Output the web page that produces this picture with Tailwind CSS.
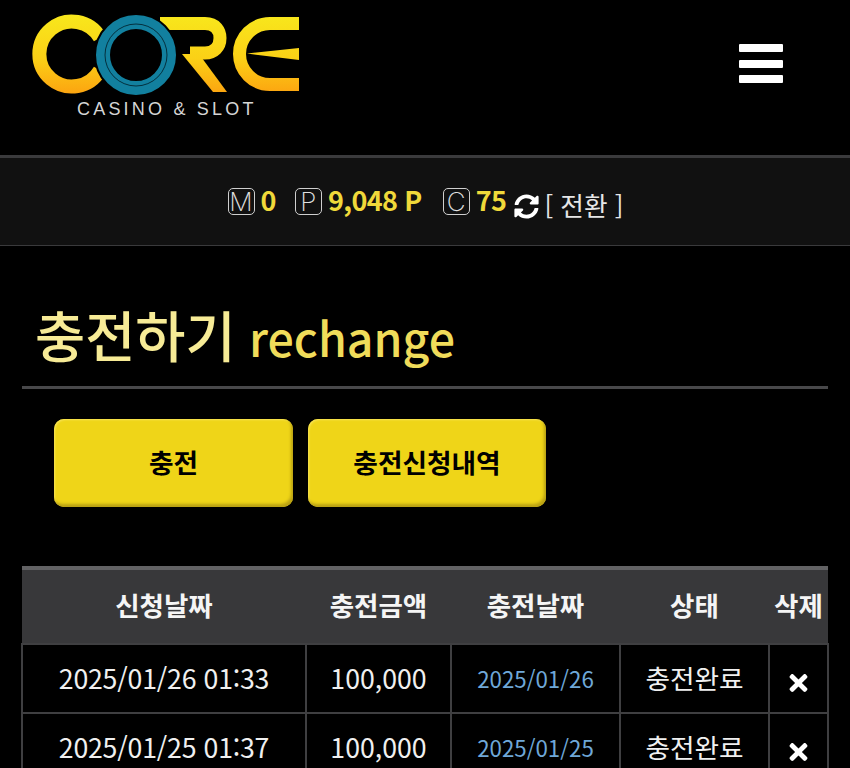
<!DOCTYPE html>
<html lang="ko">
<head>
  <meta charset="UTF-8">
  <title>충전하기 - CORE</title>
  <script src="https://cdn.jsdelivr.net/npm/@tailwindcss/browser@4"></script>
</head>
<body class="bg-black h-[768px] overflow-hidden font-['Noto_Sans_CJK_KR','Noto_Sans',sans-serif] text-[#f0f0f0]">

  <!-- Header -->
  <header class="h-[155px] flex justify-between pl-[32px] pr-[67px] pt-[14px]">
    <div class="w-[270px]">
      <svg class="block" width="270" height="82" viewBox="32 14 270 82" fill="none">
        <defs>
          <linearGradient id="gold" x1="0" y1="15" x2="0" y2="93" gradientUnits="userSpaceOnUse">
            <stop offset="0" stop-color="#f8e71c"/>
            <stop offset="0.55" stop-color="#fbd116"/>
            <stop offset="1" stop-color="#fca510"/>
          </linearGradient>
        </defs>
        <!-- C -->
        <path d="M100 37.750 A32.500 32.500 0 1 0 100 70.250" stroke="url(#gold)" stroke-width="14"/>
        <!-- R -->
        <path d="M160 23.500 H205 C216 23.500 220 31 220 38 C220 47 214 53 205 53 H190" stroke="url(#gold)" stroke-width="13"/>
        <path d="M182 54 H199 L227 92 H213 Z" fill="url(#gold)"/>
        <!-- E -->
        <path d="M299 23.500 H270 A30.500 30.500 0 0 0 270 84.500 H299" stroke="url(#gold)" stroke-width="13"/>
        <path d="M247 53.500 L299 48 V60 Z" fill="url(#gold)"/>
        <!-- ring -->
        <circle cx="136" cy="55" r="33.500" stroke="#000" stroke-width="17"/>
        <circle cx="136" cy="55" r="33" stroke="#12809f" stroke-width="14"/>
        <circle cx="136" cy="55" r="31" stroke="#04303e" stroke-width="1"/>
      </svg>
      <div class="mt-[2px] pl-[45px] text-[18px] leading-[22px] tracking-[3.2px] text-[#d5d5d5] font-['Liberation_Sans',sans-serif] whitespace-nowrap">CASINO &amp; SLOT</div>
    </div>
    <button class="w-[44px] mt-[30px] h-[39px] flex flex-col justify-between">
      <span class="block h-[8px] w-full rounded-[1px] bg-white"></span>
      <span class="block h-[8px] w-full rounded-[1px] bg-white"></span>
      <span class="block h-[8px] w-full rounded-[1px] bg-white"></span>
    </button>
  </header>

  <!-- Balance bar -->
  <section class="h-[91px] bg-[#111111] border-t-[3px] border-b border-t-[#3a3a3c] border-b-[#3a3a3c] flex items-center justify-center pl-[1px] text-[27px] tracking-[-0.6px] font-bold text-[#f0d93a]">
    <span class="w-[27px] h-[27px] border border-[#cfcfcf] rounded-[5px] flex items-center justify-center text-[26px] font-extralight tracking-normal text-[#e0e0e0] font-['Inter',sans-serif]">M</span>
    <span class="ml-[6px] mr-[19px] -mt-[3px]">0</span>
    <span class="w-[27px] h-[27px] border border-[#cfcfcf] rounded-[5px] flex items-center justify-center text-[26px] font-extralight tracking-normal text-[#e0e0e0] font-['Inter',sans-serif]">P</span>
    <span class="ml-[6px] mr-[21px] -mt-[3px]">9,048 P</span>
    <span class="w-[27px] h-[27px] border border-[#cfcfcf] rounded-[5px] flex items-center justify-center text-[26px] font-extralight tracking-normal text-[#e0e0e0] font-['Inter',sans-serif]">C</span>
    <span class="ml-[6px] mr-[8px] -mt-[3px]">75</span>
    <svg class="mt-[10px]" width="25" height="25" viewBox="0 0 512 512" fill="#ffffff"><path d="M370.72 133.28C339.458 104.008 298.888 87.962 255.848 88c-77.458.068-144.328 53.178-162.791 126.85-1.344 5.363-6.122 9.15-11.651 9.15H24.103c-7.498 0-13.194-6.807-11.807-14.176C33.933 94.924 134.813 8 256 8c66.448 0 126.791 26.136 171.315 68.685L463.03 40.97C478.149 25.851 504 36.559 504 57.941V192c0 13.255-10.745 24-24 24H345.941c-21.382 0-32.09-25.851-16.971-40.971l41.75-41.749zM32 296h134.059c21.382 0 32.09 25.851 16.971 40.971l-41.75 41.75c31.262 29.273 71.835 45.319 114.876 45.28 77.418-.07 144.315-53.144 162.787-126.849 1.344-5.363 6.122-9.15 11.651-9.15h57.304c7.498 0 13.194 6.807 11.807 14.176C478.067 417.076 377.187 504 256 504c-66.448 0-126.791-26.136-171.315-68.685L48.97 471.03C33.851 486.149 8 475.441 8 454.059V320c0-13.255 10.745-24 24-24z"/></svg>
    <span class="ml-[5px] mt-[8px] text-[25.700px] font-normal tracking-normal text-[#e6e6e6] whitespace-nowrap">[ 전환 ]</span>
  </section>

  <!-- Title -->
  <div class="mx-[22px] mt-[52px] h-[91px] border-b-[3px] border-[#48484a] pl-[13px] text-[#f0dc5a] whitespace-nowrap leading-[72px] font-medium">
    <span class="text-[54.500px] text-[#f7eb96]">충전하기</span>
    <span class="ml-[9px] text-[46.500px]">rechange</span>
  </div>

  <!-- Tabs -->
  <div class="flex gap-[15px] mt-[30px] ml-[54px]">
    <button class="w-[239px] h-[88px] pb-[2px] rounded-[10px] bg-[#efd518] shadow-[inset_-2px_-3px_3px_#b9a113,inset_1px_1px_2px_#f8e458] text-black text-[26.700px] font-bold">충전</button>
    <button class="w-[238px] h-[88px] pb-[2px] rounded-[10px] bg-[#efd518] shadow-[inset_-2px_-3px_3px_#b9a113,inset_1px_1px_2px_#f8e458] text-black text-[26.700px] font-bold">충전신청내역</button>
  </div>

  <!-- History table -->
  <table class="mt-[59px] ml-[21px] w-[806px] table-fixed border-collapse text-center text-[26.700px]">
    <colgroup>
      <col class="w-[284px]"><col class="w-[145px]"><col class="w-[169px]"><col class="w-[149px]"><col class="w-[59px]">
    </colgroup>
    <thead>
      <tr class="h-[76px] bg-[#38383a] border-t-[4px] border-[#626264] text-[#f5f5f5] text-[26.500px]">
        <th class="pb-[4px] font-bold">신청날짜</th>
        <th class="pb-[4px] font-bold">충전금액</th>
        <th class="pb-[4px] font-bold">충전날짜</th>
        <th class="pb-[4px] font-bold">상태</th>
        <th class="pb-[4px] font-bold">삭제</th>
      </tr>
    </thead>
    <tbody>
      <tr class="h-[69px]">
        <td class="border-2 border-[#3f3f41] tracking-[-0.2px]">2025/01/26 01:33</td>
        <td class="border-2 border-[#3f3f41]">100,000</td>
        <td class="border-2 border-[#3f3f41] text-[22.300px] text-[#6fa8d8]">2025/01/26</td>
        <td class="border-2 border-[#3f3f41]">충전완료</td>
        <td class="border-2 border-[#3f3f41]"><svg class="inline-block mt-[2px]" width="19" height="26" viewBox="0 0 352 512" fill="#ffffff"><path d="M242.72 256l100.07-100.07c12.28-12.28 12.28-32.19 0-44.48l-22.24-22.24c-12.28-12.28-32.19-12.28-44.48 0L176 189.28 75.93 89.21c-12.28-12.28-32.19-12.28-44.48 0L9.21 111.45c-12.28 12.28-12.28 32.19 0 44.48L109.28 256 9.21 356.07c-12.28 12.28-12.28 32.19 0 44.48l22.24 22.24c12.28 12.28 32.2 12.28 44.48 0L176 322.72l100.07 100.07c12.28 12.28 32.2 12.28 44.48 0l22.24-22.24c12.28-12.28 12.28-32.19 0-44.48L242.72 256z"/></svg></td>
      </tr>
      <tr class="h-[69px]">
        <td class="border-2 border-[#3f3f41] tracking-[-0.2px]">2025/01/25 01:37</td>
        <td class="border-2 border-[#3f3f41]">100,000</td>
        <td class="border-2 border-[#3f3f41] text-[22.300px] text-[#6fa8d8]">2025/01/25</td>
        <td class="border-2 border-[#3f3f41]">충전완료</td>
        <td class="border-2 border-[#3f3f41]"><svg class="inline-block mt-[2px]" width="19" height="26" viewBox="0 0 352 512" fill="#ffffff"><path d="M242.72 256l100.07-100.07c12.28-12.28 12.28-32.19 0-44.48l-22.24-22.24c-12.28-12.28-32.19-12.28-44.48 0L176 189.28 75.93 89.21c-12.28-12.28-32.19-12.28-44.48 0L9.21 111.45c-12.28 12.28-12.28 32.19 0 44.48L109.28 256 9.21 356.07c-12.28 12.28-12.28 32.19 0 44.48l22.24 22.24c12.28 12.28 32.2 12.28 44.48 0L176 322.72l100.07 100.07c12.28 12.28 32.2 12.28 44.48 0l22.24-22.24c12.28-12.28 12.28-32.19 0-44.48L242.72 256z"/></svg></td>
      </tr>
    </tbody>
  </table>

</body>
</html>
